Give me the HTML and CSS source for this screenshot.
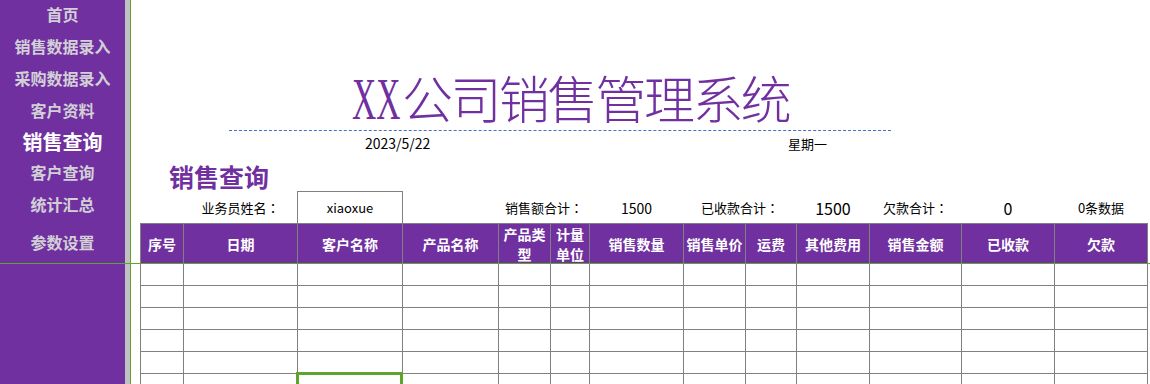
FILE: index.html
```html
<!DOCTYPE html>
<html lang="zh-CN">
<head>
<meta charset="utf-8">
<title>XX公司销售管理系统</title>
<link rel="stylesheet" href="styles.css">
</head>
<body>
<div class="app">
  <nav class="sidebar">
    <div class="nav-item">首页</div>
    <div class="nav-item">销售数据录入</div>
    <div class="nav-item">采购数据录入</div>
    <div class="nav-item">客户资料</div>
    <div class="nav-item active">销售查询</div>
    <div class="nav-item">客户查询</div>
    <div class="nav-item">统计汇总</div>
    <div class="nav-item last">参数设置</div>
  </nav>
  <div class="split-gray"></div>
  <div class="split-green"></div>
  <main class="main">
    <h1 class="title"><span class="xx">XX</span>公司销售管理系统</h1>
    <div class="rule"></div>
    <div class="date-row"><span class="date">2023/5/22</span><span class="weekday">星期一</span></div>
    <h2 class="section-title">销售查询</h2>
    <div class="grid summary">
      <div class="s-cell"></div>
      <div class="s-cell">业务员姓名<span class="colon">：</span></div>
      <div class="s-cell input-box">xiaoxue</div>
      <div class="s-cell"></div>
      <div class="s-cell span2">销售额合计<span class="colon">：</span></div>
      <div class="s-cell num">1500</div>
      <div class="s-cell span2">已收款合计<span class="colon">：</span></div>
      <div class="s-cell num big">1500</div>
      <div class="s-cell">欠款合计<span class="colon">：</span></div>
      <div class="s-cell num big">0</div>
      <div class="s-cell">0条数据</div>
    </div>
    <div class="grid sheet">
      <div class="hd">序号</div>
      <div class="hd">日期</div>
      <div class="hd">客户名称</div>
      <div class="hd">产品名称</div>
      <div class="hd">产品类型</div>
      <div class="hd">计量单位</div>
      <div class="hd">销售数量</div>
      <div class="hd">销售单价</div>
      <div class="hd">运费</div>
      <div class="hd">其他费用</div>
      <div class="hd">销售金额</div>
      <div class="hd">已收款</div>
      <div class="hd">欠款</div>

      <div class="c"></div><div class="c"></div><div class="c"></div><div class="c"></div><div class="c"></div><div class="c"></div><div class="c"></div><div class="c"></div><div class="c"></div><div class="c"></div><div class="c"></div><div class="c"></div><div class="c"></div>
      <div class="c"></div><div class="c"></div><div class="c"></div><div class="c"></div><div class="c"></div><div class="c"></div><div class="c"></div><div class="c"></div><div class="c"></div><div class="c"></div><div class="c"></div><div class="c"></div><div class="c"></div>
      <div class="c"></div><div class="c"></div><div class="c"></div><div class="c"></div><div class="c"></div><div class="c"></div><div class="c"></div><div class="c"></div><div class="c"></div><div class="c"></div><div class="c"></div><div class="c"></div><div class="c"></div>
      <div class="c"></div><div class="c"></div><div class="c"></div><div class="c"></div><div class="c"></div><div class="c"></div><div class="c"></div><div class="c"></div><div class="c"></div><div class="c"></div><div class="c"></div><div class="c"></div><div class="c"></div>
      <div class="c"></div><div class="c"></div><div class="c"></div><div class="c"></div><div class="c"></div><div class="c"></div><div class="c"></div><div class="c"></div><div class="c"></div><div class="c"></div><div class="c"></div><div class="c"></div><div class="c"></div>
      <div class="c"></div><div class="c"></div><div class="c selected"><div class="sel"></div></div><div class="c"></div><div class="c"></div><div class="c"></div><div class="c"></div><div class="c"></div><div class="c"></div><div class="c"></div><div class="c"></div><div class="c"></div><div class="c"></div>
    </div>
  </main>
</div>
<div class="freeze-h"></div>
</body>
</html>
```

FILE: styles.css
```css
* { box-sizing: border-box; }

html, body {
  margin: 0;
  padding: 0;
  width: 1150px;
  height: 384px;
  overflow: hidden;
  background: #ffffff;
  font-family: "Noto Sans CJK SC", "Noto Sans", sans-serif;
  color: #000000;
}

.app {
  display: flex;
  height: 384px;
  position: relative;
}

/* ---------- sidebar ---------- */
.sidebar {
  width: 125px;
  flex: 0 0 125px;
  background: #7030a0;
  display: flex;
  flex-direction: column;
}

.nav-item {
  height: 32px;
  flex: 0 0 auto;
  display: flex;
  align-items: center;
  justify-content: center;
  color: #d2d0d6;
  font-size: 16px;
  font-weight: 700;
  white-space: nowrap;
}

.nav-item:first-child { margin-top: -2px; }

.nav-item.active {
  color: #ffffff;
  font-size: 20px;
  height: 30px;
}

.nav-item.last {
  height: 40px;
  margin-top: 2px;
}

.split-gray {
  width: 5px;
  flex: 0 0 5px;
  background: #c0c0c0;
}

.split-green {
  width: 1px;
  flex: 0 0 1px;
  background: #5ea52f;
}

/* ---------- main ---------- */
.main {
  flex: 1 1 auto;
  padding-left: 9px;
  overflow: hidden;
}

.title {
  margin: 70px 0 0 0;
  padding-left: 212px;
  height: 57px;
  font-size: 51px;
  line-height: 55px;
  font-weight: 300;
  color: #7030a0;
  white-space: nowrap;
  letter-spacing: -2.6px;
}

.xx {
  display: inline-block;
  width: 50px;
  font-family: "Liberation Serif", serif;
  font-size: 60px;
  font-weight: 400;
  letter-spacing: 0;
  transform: scaleX(0.56);
  transform-origin: 0 50%;
  white-space: nowrap;
}

.rule {
  margin: 3px 0 0 89px;
  width: 662px;
  height: 0;
  border-top: 1px dashed #4472c4;
}

.date-row {
  height: 24px;
  display: flex;
  align-items: center;
  padding-left: 225px;
  white-space: nowrap;
}

.date {
  width: 423px;
  font-size: 14px;
}

.weekday {
  font-size: 13px;
}

.section-title {
  margin: 0;
  height: 37px;
  padding: 6px 0 0 29px;
  font-size: 25px;
  line-height: 31px;
  font-weight: 700;
  color: #7030a0;
}

/* ---------- grid (shared column template) ---------- */
.grid {
  display: grid;
  grid-template-columns: 42px 113px 104px 95px 51px 38px 93px 61px 50px 72px 91px 92px 92px;
  column-gap: 1px;
  width: 1008px;
}

.summary {
  padding: 0 1px;
  height: 31px;
  grid-template-rows: 31px;
}

.s-cell {
  display: flex;
  align-items: center;
  justify-content: center;
  font-size: 13px;
  white-space: nowrap;
}

.colon {
  font-family: "Noto Sans CJK TC", "Noto Sans CJK SC", sans-serif;
}

.s-cell.span2 { grid-column: span 2; }

.s-cell.num { font-size: 14px; }
.s-cell.big { font-size: 16px; }

.input-box {
  box-shadow: 0 0 0 1px #808080;
}

.sheet {
  background: #808080;
  padding: 1px;
  row-gap: 1px;
  grid-template-rows: 39px;
  grid-auto-rows: 21px;
}

.hd {
  background: #7030a0;
  color: #ffffff;
  font-size: 14px;
  font-weight: 700;
  line-height: 20px;
  display: flex;
  align-items: center;
  justify-content: center;
  text-align: center;
  overflow: hidden;
}

.c {
  background: #ffffff;
}

.selected { position: relative; }

.sel {
  position: absolute;
  left: -2px;
  top: -2px;
  right: -1px;
  bottom: -2px;
  border: 3px solid #5ea52f;
}

/* freeze pane line overlaying everything */
.freeze-h {
  position: absolute;
  left: 0;
  top: 263px;
  width: 1150px;
  height: 1px;
  background: #5ea52f;
}
```
